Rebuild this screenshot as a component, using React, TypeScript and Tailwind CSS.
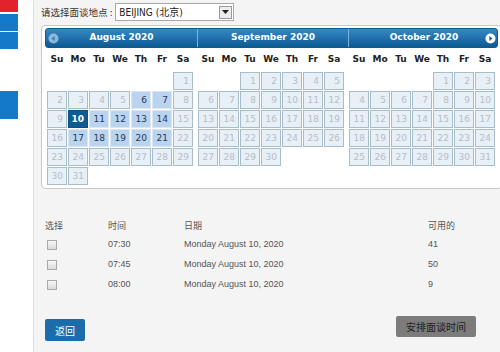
import React from "react";

type Month = {
  name: string;
  offset: number;
  days: number;
  enabled: number[];
  selected?: number;
};

const months: Month[] = [
  {
    name: "August 2020",
    offset: 6,
    days: 31,
    enabled: [6, 7, 11, 12, 13, 14, 17, 18, 19, 20, 21],
    selected: 10,
  },
  { name: "September 2020", offset: 2, days: 30, enabled: [] },
  { name: "October 2020", offset: 4, days: 31, enabled: [] },
];

const dayNames = ["Su", "Mo", "Tu", "We", "Th", "Fr", "Sa"];

const slots = [
  { time: "07:30", date: "Monday August 10, 2020", free: "41" },
  { time: "07:45", date: "Monday August 10, 2020", free: "50" },
  { time: "08:00", date: "Monday August 10, 2020", free: "9" },
];

function NavIcon({ dir }: { dir: "prev" | "next" }) {
  const isPrev = dir === "prev";
  return (
    <svg width="11" height="11" viewBox="0 0 11 11">
      <circle cx="5.5" cy="5.5" r="5" fill={isPrev ? "#8db8d8" : "#ffffff"} />
      {isPrev ? (
        <path d="M6.6 3 L3.6 5.5 L6.6 8 Z" fill="#3a7db0" />
      ) : (
        <path d="M4.4 3 L7.4 5.5 L4.4 8 Z" fill="#1a5d8f" />
      )}
    </svg>
  );
}

function MonthGrid({ month }: { month: Month }) {
  const cells: (number | null)[] = [];
  for (let i = 0; i < month.offset; i++) cells.push(null);
  for (let d = 1; d <= month.days; d++) cells.push(d);

  return (
    <div className="w-[151px] shrink-0">
      <div className="grid grid-cols-[repeat(7,20px)] gap-x-px ml-[2px] h-[24px] items-center">
        {dayNames.map((n) => (
          <div
            key={n}
            className="text-center text-[9px] font-bold text-[#222]"
          >
            {n}
          </div>
        ))}
      </div>
      <div className="grid grid-cols-[repeat(7,20px)] auto-rows-[18px] gap-px ml-[2px]">
        {cells.map((d, i) => {
          if (d === null) return <div key={i} />;
          const isSel = month.selected === d;
          const isOn = month.enabled.includes(d);
          return (
            <div
              key={i}
              className={
                isSel
                  ? "border border-[#0b5283] bg-[#0e5c93] text-white font-bold text-right pr-[3px] leading-[16px] text-[9px]"
                  : isOn
                    ? "border border-[#dbe6f0] bg-[#bad3ee] text-[#1e3a58] text-right pr-[3px] leading-[16px] text-[9px]"
                    : "border border-[#a9bcc9] bg-[#e7eff7] text-[#b7bec6] text-right pr-[3px] leading-[16px] text-[9px]"
              }
            >
              {d}
            </div>
          );
        })}
      </div>
    </div>
  );
}

export default function App() {
  return (
    <div className="w-[500px] h-[352px] overflow-hidden flex bg-[#f4f4f4] font-['Liberation_Sans','Noto_Sans_CJK_SC',sans-serif]">
      {/* Sidebar */}
      <div className="w-[34px] shrink-0 bg-white border-r border-[#dedede] flex flex-col">
        <div className="w-[18px] h-[12px] bg-[#e3232b]" />
        <div className="w-[18px] h-[17px] bg-[#1479c9] mt-[2px]" />
        <div className="w-[18px] h-[17px] bg-[#1479c9] mt-px" />
        <div className="w-[18px] h-[28px] bg-[#1479c9] mt-[42px]" />
      </div>

      {/* Main */}
      <div className="flex-1 pl-[7px] pt-[3px] min-w-0">
        <div className="flex items-center h-[18px]">
          <span className="text-[9.5px] text-[#333] font-['Noto_Sans_CJK_SC',sans-serif] whitespace-nowrap mr-[3px]">
            请选择面谈地点 :
          </span>
          <div className="w-[119px] h-[18px] bg-white border border-[#a8a8a8] flex items-center justify-between pl-[3px] pr-[1px]">
            <span className="text-[10px] text-[#222] font-['DejaVu_Sans_Condensed','Noto_Sans_CJK_SC',sans-serif] whitespace-nowrap">
              BEIJING (北京)
            </span>
            <div className="w-[13px] h-[13px] border border-[#9a9a9a] bg-[#ececec] flex items-center justify-center">
              <svg width="7" height="4" viewBox="0 0 7 4">
                <path d="M0 0 H7 L3.5 4 Z" fill="#222" />
              </svg>
            </div>
          </div>
        </div>

        {/* Calendar */}
        <div className="mt-[4px] w-[461px] bg-white border border-[#c9c9c9] rounded-[4px] pt-[2px] pl-[3px] pb-[3px] font-['DejaVu_Sans',sans-serif]">
          <div className="flex h-[20px] w-[453px] rounded-[3px] border border-[#0d5a90] bg-gradient-to-b from-[#3489c6] to-[#0d5a93] overflow-hidden">
            {months.map((m, i) => (
              <div
                key={m.name}
                className={
                  i === 0
                    ? "w-[151px] shrink-0 flex items-center px-[2px] text-white text-[9px] font-bold"
                    : "w-[151px] shrink-0 flex items-center px-[2px] text-white text-[9px] font-bold border-l border-[#7fb1d6]"
                }
              >
                <div className="w-[12px] flex items-center">
                  {i === 0 && <NavIcon dir="prev" />}
                </div>
                <div className="flex-1 text-center">{m.name}</div>
                <div className="w-[12px] flex items-center">
                  {i === 2 && <NavIcon dir="next" />}
                </div>
              </div>
            ))}
          </div>
          <div className="flex">
            {months.map((m) => (
              <MonthGrid key={m.name} month={m} />
            ))}
          </div>
        </div>

        {/* Slots */}
        <div className="mt-[27px] ml-[4px] text-[9px] text-[#555]">
          <div className="flex h-[19px] items-center font-['Noto_Sans_CJK_SC',sans-serif]">
            <div className="w-[63px]">选择</div>
            <div className="w-[76px]">时间</div>
            <div className="w-[244px]">日期</div>
            <div>可用的</div>
          </div>
          {slots.map((s) => (
            <div key={s.time} className="flex h-[20px] items-center">
              <div className="w-[63px] pl-[2px]">
                <div className="w-[10px] h-[10px] border border-[#a9a9a9] bg-gradient-to-b from-[#f6f6f6] to-[#dcdcdc]" />
              </div>
              <div className="w-[76px]">{s.time}</div>
              <div className="w-[244px]">{s.date}</div>
              <div>{s.free}</div>
            </div>
          ))}
        </div>

        {/* Buttons */}
        <div className="flex justify-between items-start mt-[21px] ml-[4px] mr-[24px] font-['Noto_Sans_CJK_SC',sans-serif]">
          <button className="mt-[3px] w-[40px] h-[22px] rounded-[2px] bg-[#1b6ca8] text-white text-[10px]">
            返回
          </button>
          <button className="w-[80px] h-[21px] rounded-[2px] bg-[#7c7c7c] text-[#1e1e1e] text-[10px]">
            安排面谈时间
          </button>
        </div>
      </div>
    </div>
  );
}
